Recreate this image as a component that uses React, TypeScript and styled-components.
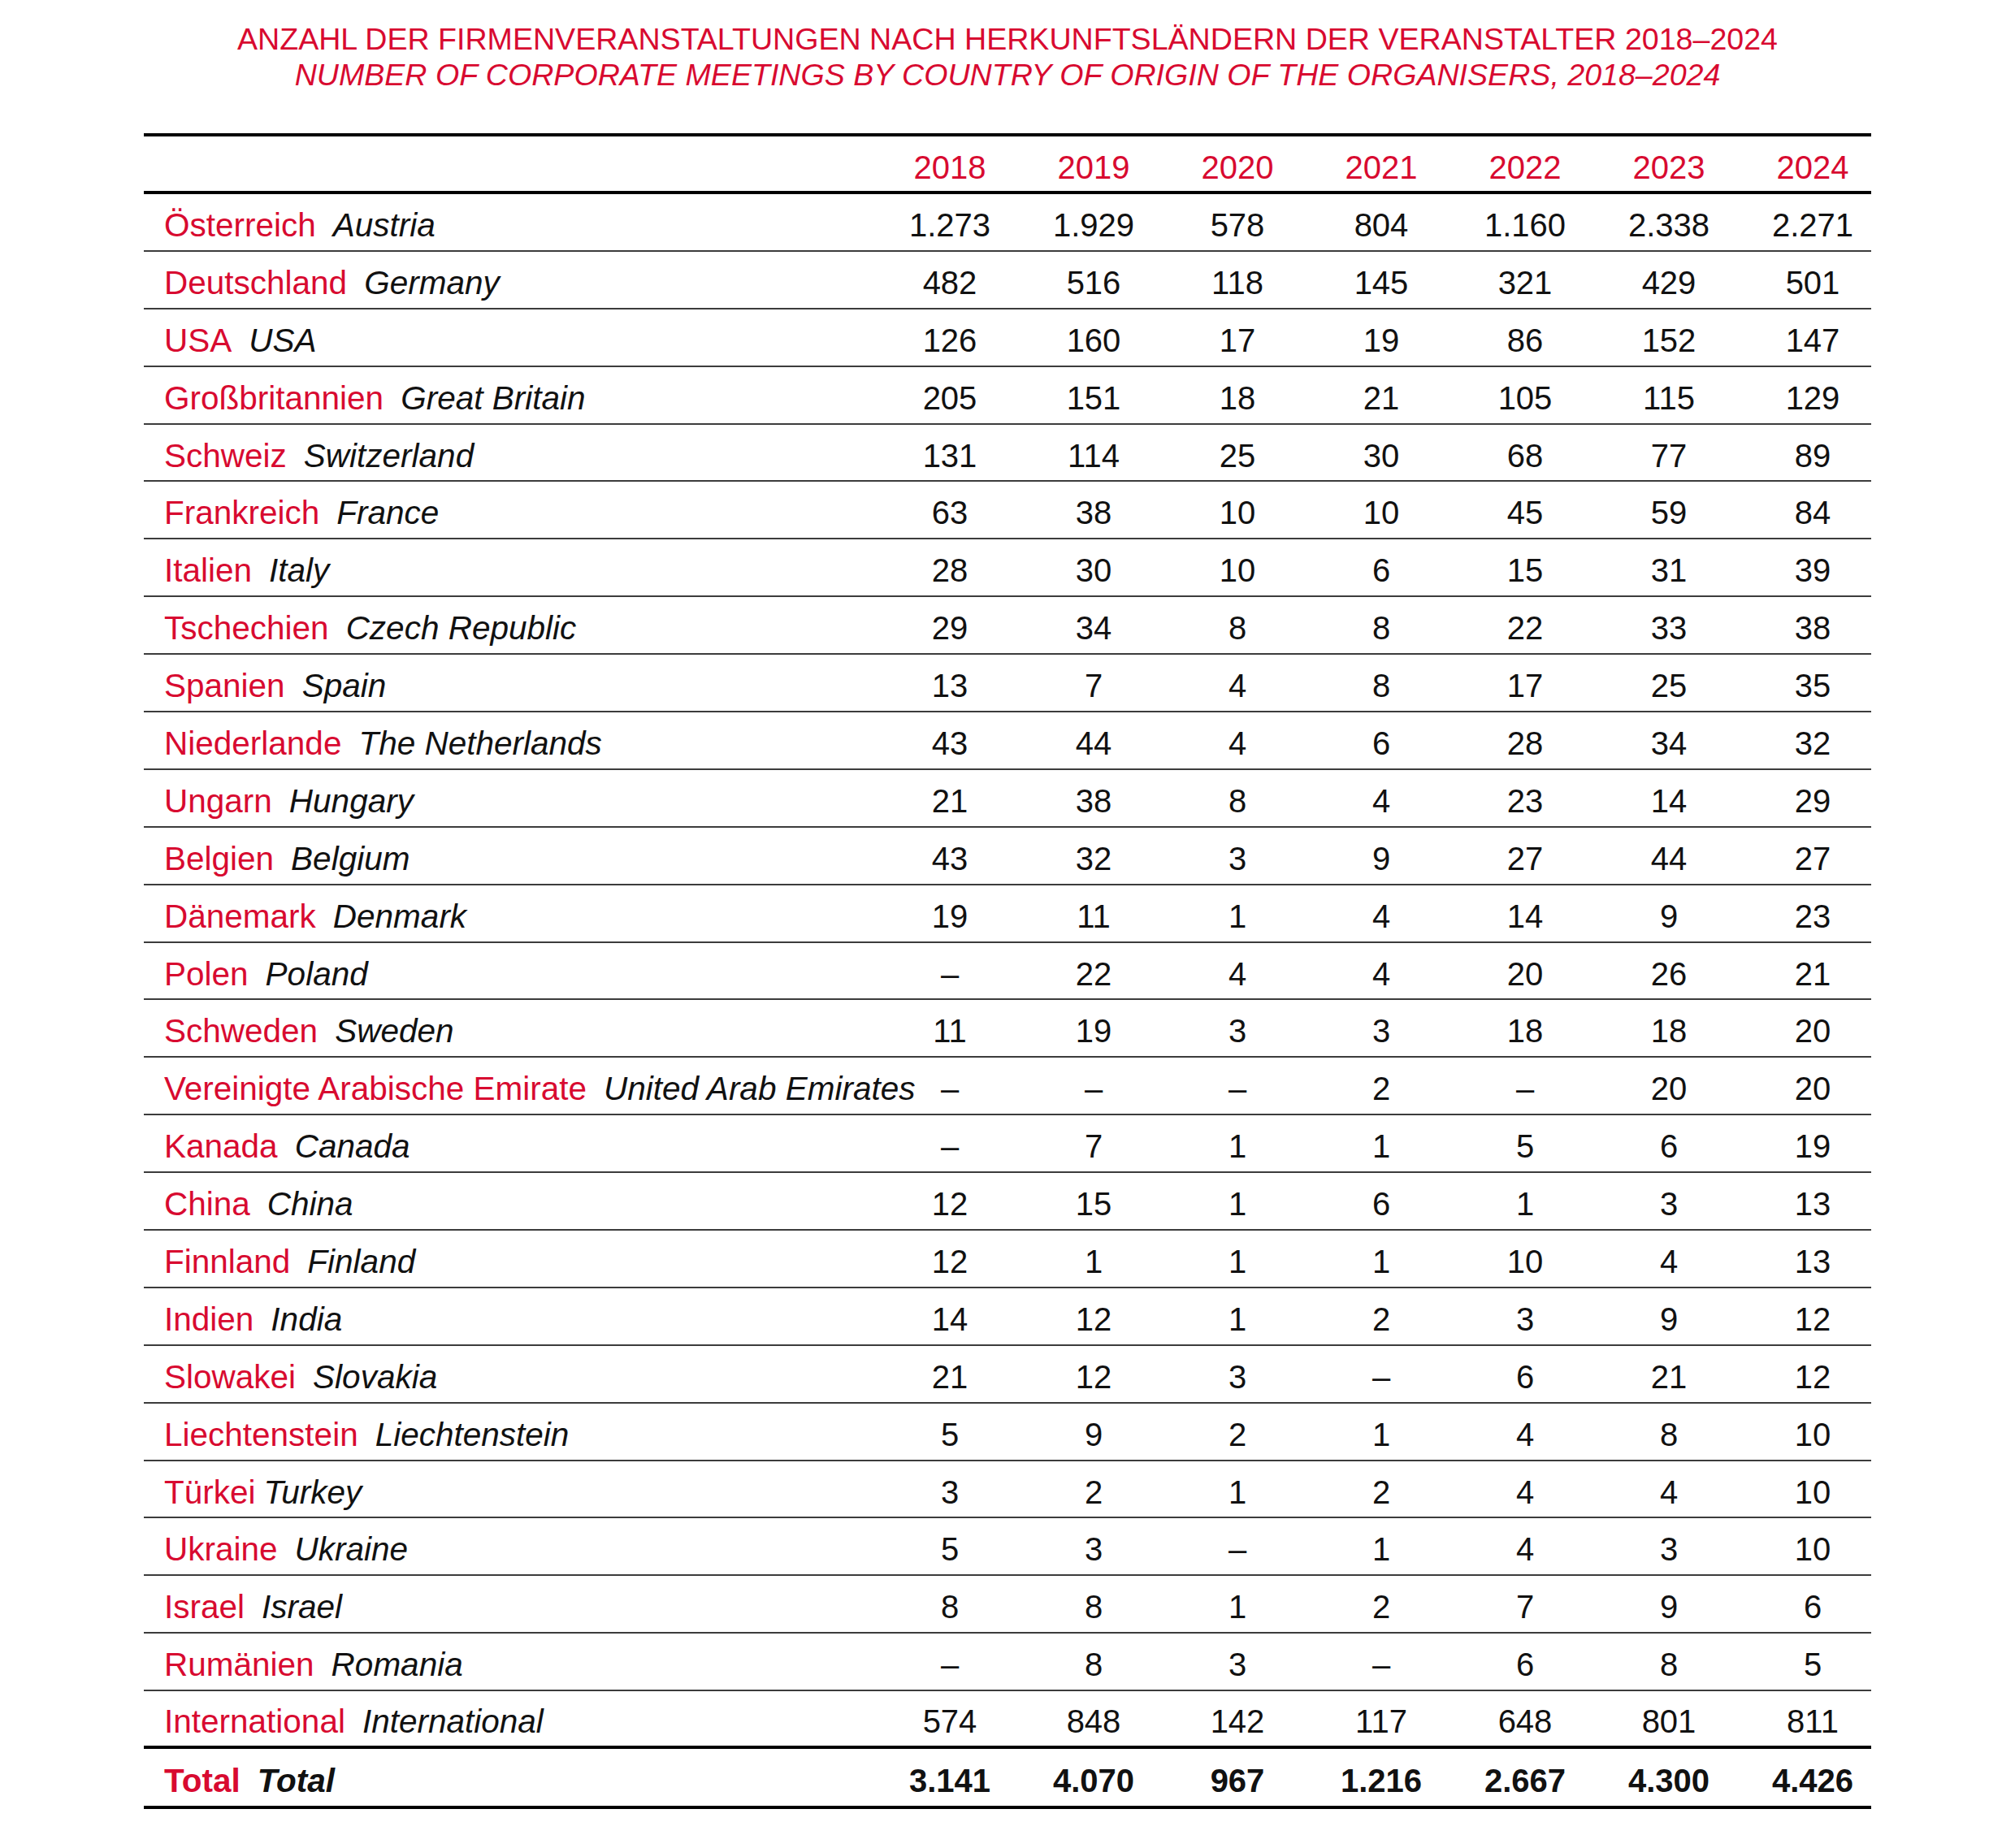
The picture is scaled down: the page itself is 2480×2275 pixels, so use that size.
import styled, { createGlobalStyle } from 'styled-components';

const RED = '#d80a30';

const GlobalStyle = createGlobalStyle`
  html, body {
    margin: 0;
    padding: 0;
    background: #fff;
  }
  body {
    font-family: "Liberation Sans", Arial, sans-serif;
    color: #111;
  }
`;

type Row = { de: string; en: string; values: string[]; tight?: boolean };

const years = ['2018', '2019', '2020', '2021', '2022', '2023', '2024'];

const rows: Row[] = [
  { de: 'Österreich', en: 'Austria', values: ['1.273', '1.929', '578', '804', '1.160', '2.338', '2.271'] },
  { de: 'Deutschland', en: 'Germany', values: ['482', '516', '118', '145', '321', '429', '501'] },
  { de: 'USA', en: 'USA', values: ['126', '160', '17', '19', '86', '152', '147'] },
  { de: 'Großbritannien', en: 'Great Britain', values: ['205', '151', '18', '21', '105', '115', '129'] },
  { de: 'Schweiz', en: 'Switzerland', values: ['131', '114', '25', '30', '68', '77', '89'] },
  { de: 'Frankreich', en: 'France', values: ['63', '38', '10', '10', '45', '59', '84'] },
  { de: 'Italien', en: 'Italy', values: ['28', '30', '10', '6', '15', '31', '39'] },
  { de: 'Tschechien', en: 'Czech Republic', values: ['29', '34', '8', '8', '22', '33', '38'] },
  { de: 'Spanien', en: 'Spain', values: ['13', '7', '4', '8', '17', '25', '35'] },
  { de: 'Niederlande', en: 'The Netherlands', values: ['43', '44', '4', '6', '28', '34', '32'] },
  { de: 'Ungarn', en: 'Hungary', values: ['21', '38', '8', '4', '23', '14', '29'] },
  { de: 'Belgien', en: 'Belgium', values: ['43', '32', '3', '9', '27', '44', '27'] },
  { de: 'Dänemark', en: 'Denmark', values: ['19', '11', '1', '4', '14', '9', '23'] },
  { de: 'Polen', en: 'Poland', values: ['–', '22', '4', '4', '20', '26', '21'] },
  { de: 'Schweden', en: 'Sweden', values: ['11', '19', '3', '3', '18', '18', '20'] },
  { de: 'Vereinigte Arabische Emirate', en: 'United Arab Emirates', values: ['–', '–', '–', '2', '–', '20', '20'] },
  { de: 'Kanada', en: 'Canada', values: ['–', '7', '1', '1', '5', '6', '19'] },
  { de: 'China', en: 'China', values: ['12', '15', '1', '6', '1', '3', '13'] },
  { de: 'Finnland', en: 'Finland', values: ['12', '1', '1', '1', '10', '4', '13'] },
  { de: 'Indien', en: 'India', values: ['14', '12', '1', '2', '3', '9', '12'] },
  { de: 'Slowakei', en: 'Slovakia', values: ['21', '12', '3', '–', '6', '21', '12'] },
  { de: 'Liechtenstein', en: 'Liechtenstein', values: ['5', '9', '2', '1', '4', '8', '10'] },
  { de: 'Türkei', en: 'Turkey', values: ['3', '2', '1', '2', '4', '4', '10'], tight: true },
  { de: 'Ukraine', en: 'Ukraine', values: ['5', '3', '–', '1', '4', '3', '10'] },
  { de: 'Israel', en: 'Israel', values: ['8', '8', '1', '2', '7', '9', '6'] },
  { de: 'Rumänien', en: 'Romania', values: ['–', '8', '3', '–', '6', '8', '5'] },
];

const international: Row = {
  de: 'International',
  en: 'International',
  values: ['574', '848', '142', '117', '648', '801', '811'],
};

const totals = ['3.141', '4.070', '967', '1.216', '2.667', '4.300', '4.426'];

const Page = styled.div`
  width: 2480px;
  min-height: 2275px;
  padding-top: 26px;
  box-sizing: border-box;
`;

const Heading = styled.h1`
  margin: 0;
  text-align: center;
  font-weight: 400;
  font-size: 37.6px;
  line-height: 44px;
  color: ${RED};
`;

const HeadingLine = styled.div<{ $italic?: boolean }>`
  font-style: ${(p) => (p.$italic ? 'italic' : 'normal')};
`;

const Table = styled.div`
  width: 2126px;
  margin: 50px auto 0;
`;

const GridRow = styled.div<{ $height: number; $rule: number }>`
  display: grid;
  grid-template-columns: minmax(0, 1fr) repeat(7, 177px);
  align-items: center;
  height: ${(p) => p.$height}px;
  box-sizing: border-box;
  border-bottom: ${(p) => p.$rule}px solid ${(p) => (p.$rule > 2 ? '#000' : '#3c3c3c')};
  padding-top: 8px;
  font-size: 40px;
`;

const HeaderRow = styled(GridRow)`
  border-top: 4px solid #000;
  padding-top: 10px;
`;

const NameCell = styled.div`
  padding-left: 25px;
  white-space: nowrap;
  overflow: visible;
  font-size: 40.5px;
`;

const German = styled.span<{ $tight?: boolean; $bold?: boolean }>`
  color: ${RED};
  margin-right: ${(p) => (p.$tight ? '10px' : '21px')};
  font-weight: ${(p) => (p.$bold ? 700 : 400)};
`;

const English = styled.span<{ $bold?: boolean }>`
  font-style: italic;
  color: #111;
  font-weight: ${(p) => (p.$bold ? 700 : 400)};
`;

const NumCell = styled.div<{ $bold?: boolean; $red?: boolean }>`
  text-align: center;
  padding-left: 33px;
  color: ${(p) => (p.$red ? RED : '#111')};
  font-weight: ${(p) => (p.$bold ? 700 : 400)};
`;

function CountryRow({ row, height, rule }: { row: Row; height: number; rule: number }) {
  return (
    <GridRow $height={height} $rule={rule}>
      <NameCell>
        <German $tight={row.tight}>{row.de}</German>
        <English>{row.en}</English>
      </NameCell>
      {row.values.map((v, i) => (
        <NumCell key={i}>{v}</NumCell>
      ))}
    </GridRow>
  );
}

export default function App() {
  return (
    <Page>
      <GlobalStyle />
      <Heading>
        <HeadingLine>ANZAHL DER FIRMENVERANSTALTUNGEN NACH HERKUNFTSLÄNDERN DER VERANSTALTER 2018–2024</HeadingLine>
        <HeadingLine $italic>NUMBER OF CORPORATE MEETINGS BY COUNTRY OF ORIGIN OF THE ORGANISERS, 2018–2024</HeadingLine>
      </Heading>

      <Table>
        <HeaderRow $height={75} $rule={4}>
          <div />
          {years.map((y) => (
            <NumCell key={y} $red>{y}</NumCell>
          ))}
        </HeaderRow>

        {rows.map((r) => (
          <CountryRow key={r.de} row={r} height={70.9} rule={2} />
        ))}

        <CountryRow row={international} height={71.3} rule={4} />

        <GridRow $height={73.3} $rule={4}>
          <NameCell>
            <German $bold>Total</German>
            <English $bold>Total</English>
          </NameCell>
          {totals.map((t, i) => (
            <NumCell key={i} $bold>{t}</NumCell>
          ))}
        </GridRow>
      </Table>
    </Page>
  );
}
